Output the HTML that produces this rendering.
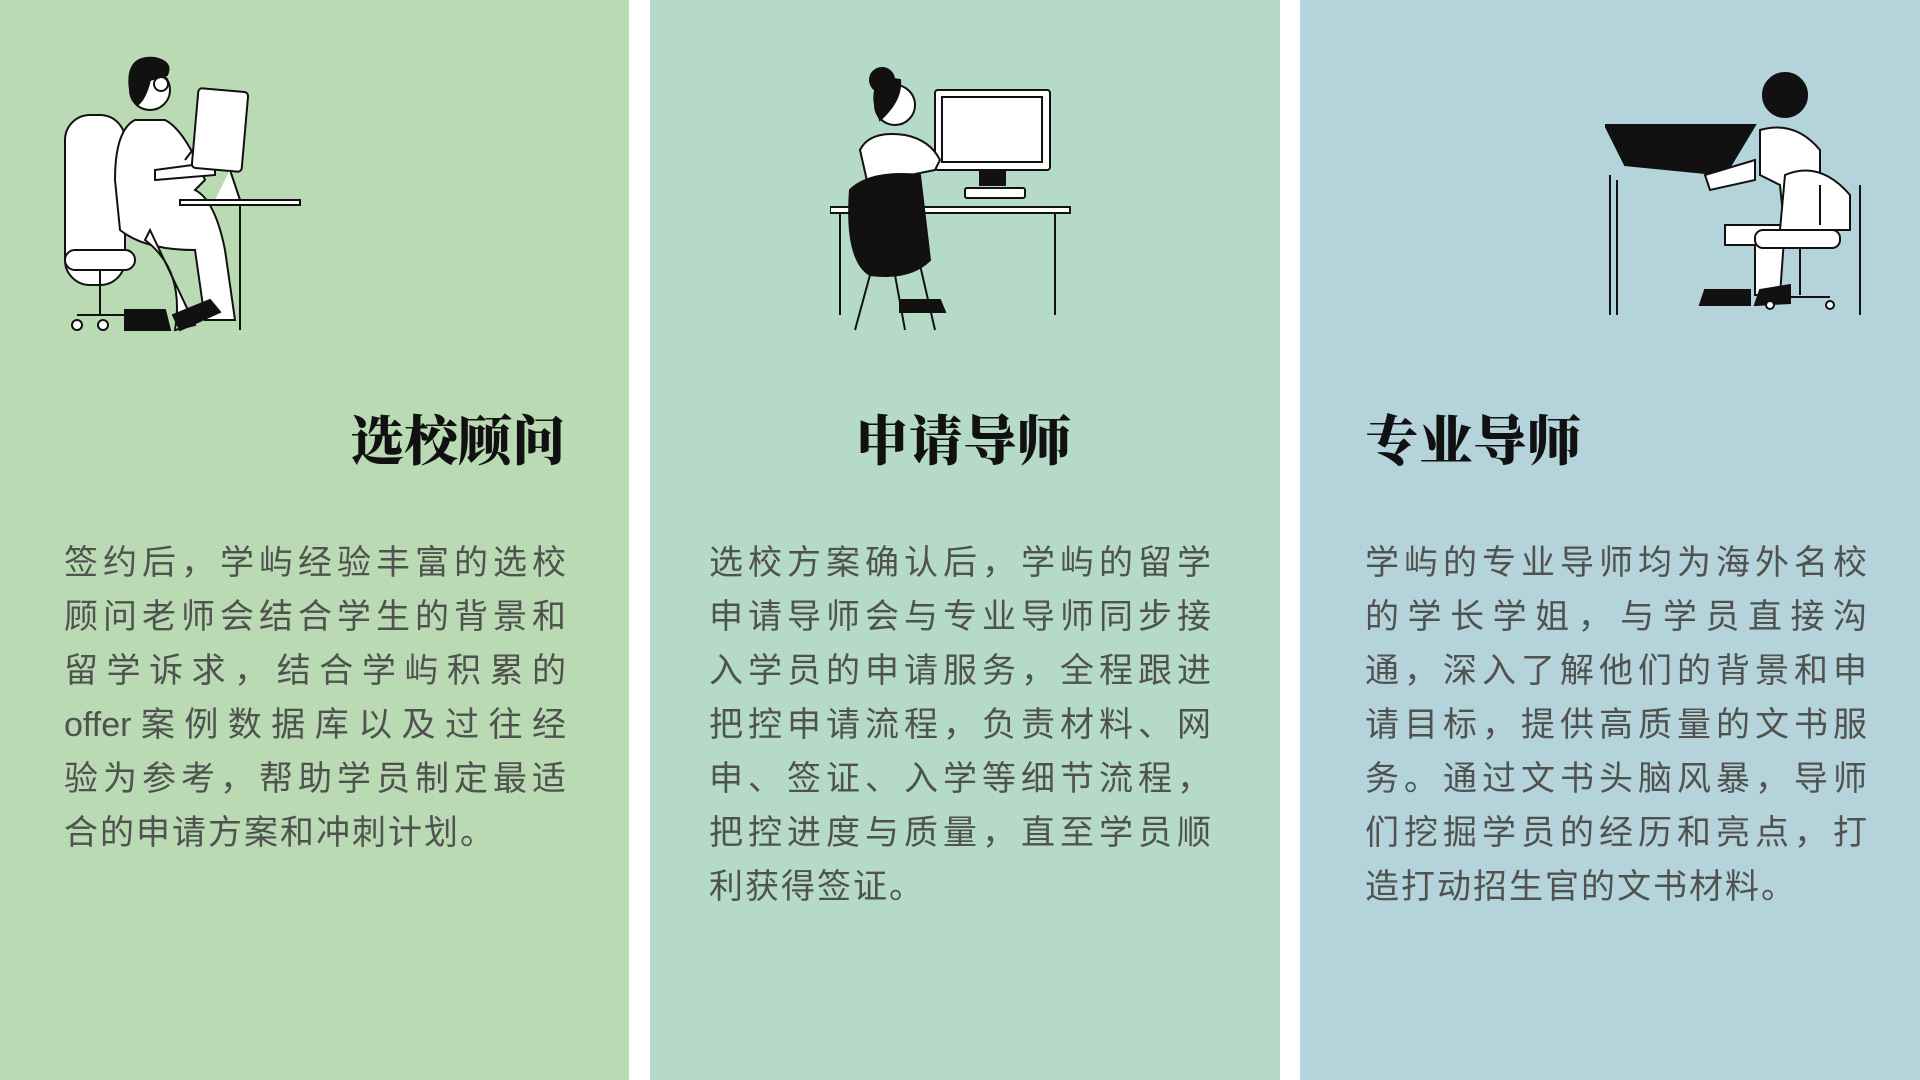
<!DOCTYPE html>
<html><head><meta charset="utf-8"><style>
html,body{margin:0;padding:0;width:1920px;height:1080px;background:#fff;overflow:hidden}
.p{position:absolute;top:0;height:1080px}
.t{position:absolute;font-family:"Noto Serif CJK SC",serif;font-weight:900;font-size:54px;color:#111;top:398px;line-height:80px;white-space:nowrap}
.b{position:absolute;top:536px;width:502px;font-family:"Liberation Sans","Noto Sans CJK SC",sans-serif;font-size:34px;color:#4f524f;line-height:54px}
.b div{text-align:justify;text-align-last:justify;white-space:nowrap;height:54px}
.b div.l{text-align-last:left;letter-spacing:2px}
svg{position:absolute}
</style></head><body>
<div class="p" style="left:0;width:629px;background:#badab4"></div>
<div class="p" style="left:650px;width:630px;background:#b5dac8"></div>
<div class="p" style="left:1300px;width:620px;background:#b5d3db"></div>

<svg style="left:55px;top:50px" width="260" height="290" viewBox="0 0 260 290" fill="#fff" stroke="#111" stroke-width="2">
<rect x="10" y="65" width="60" height="170" rx="25"/>
<path d="M80 70 Q60 80 60 130 L65 180 Q90 200 140 200 L150 270 L180 270 L170 200 Q160 150 140 140 L150 130 Q130 80 110 70Z"/>
<path d="M95 180 L140 275 L120 280 Q130 220 90 190Z"/>
<rect x="10" y="200" width="70" height="20" rx="10"/>
<path d="M45 220 V265 M22 265 H75" fill="none"/>
<circle cx="22" cy="275" r="5"/><circle cx="48" cy="275" r="5"/>
<path d="M70 260 L110 260 L115 280 L70 280Z" fill="#111"/>
<path d="M118 265 L155 250 L165 262 L125 280Z" fill="#111"/>
<circle cx="95" cy="40" r="20"/>
<path d="M75 40 Q70 5 100 8 Q118 12 112 25 L95 30 Q90 50 82 55Z" fill="#111"/>
<circle cx="106" cy="34" r="7" fill="none"/>
<path d="M100 120 L160 112 L160 125 L100 130Z"/>
<path d="M130 110 L145 90" fill="none"/>
<rect x="140" y="40" width="50" height="80" rx="4" transform="rotate(5 165 80)"/>
<path d="M175 120 L185 150 L160 150" />
<path d="M125 150 H245 V155 H125Z"/>
<path d="M185 155 V280" fill="none"/>
</svg>

<svg style="left:830px;top:60px" width="250" height="280" viewBox="0 0 250 280" fill="#fff" stroke="#111" stroke-width="2">
<rect x="105" y="30" width="115" height="80" rx="3"/>
<rect x="112" y="37" width="100" height="65" fill="none"/>
<path d="M150 110 V125 H175 V110" fill="#111"/>
<rect x="135" y="128" width="60" height="10" rx="2"/>
<path d="M0 147 H240 V153 H0Z"/>
<path d="M10 153 V255 M225 153 V255" fill="none"/>
<path d="M30 90 Q40 70 75 75 Q100 80 110 100 L105 110 L80 115 L90 200 L55 200Z"/>
<circle cx="65" cy="45" r="20"/>
<path d="M45 45 Q40 15 70 20 Q72 40 50 60Z" fill="#111"/>
<circle cx="52" cy="20" r="12" fill="#111"/>
<path d="M20 130 Q40 110 90 115 L100 200 Q80 220 40 215 Q15 200 20 130Z" fill="#111"/>
<path d="M40 215 L25 270 M65 215 L75 270 M90 205 L105 270" fill="none"/>
<path d="M70 240 L110 240 L115 252 L70 252Z" fill="#111"/>
</svg>

<svg style="left:1605px;top:65px" width="265" height="260" viewBox="0 0 265 260" fill="#fff" stroke="#111" stroke-width="2">
<path d="M0 60 L150 60 L120 110 L20 100Z" fill="#111"/>
<path d="M5 110 V250 M12 115 V250" fill="none"/>
<circle cx="180" cy="30" r="22" fill="#111"/>
<path d="M155 65 Q190 55 215 85 L215 170 L180 170 L175 120 L155 110Z"/>
<path d="M100 110 L150 95 L150 115 L105 125Z"/>
<path d="M120 160 L180 160 L175 230 L150 230 L150 180 L120 180Z"/>
<path d="M100 225 L145 225 L145 240 L95 240Z" fill="#111"/>
<path d="M155 225 L185 220 L185 238 L150 240Z" fill="#111"/>
<path d="M180 110 Q215 95 245 130 V165 H175Z"/>
<rect x="150" y="165" width="85" height="18" rx="8"/>
<path d="M195 183 V230 M165 232 H225 M215 120 V160 M255 120 V250" fill="none"/>
<circle cx="165" cy="240" r="4"/><circle cx="225" cy="240" r="4"/>
</svg>

<div class="t" style="right:1354px">选校顾问</div>
<div class="t" style="left:855px">申请导师</div>
<div class="t" style="left:1365px">专业导师</div>

<div class="b" style="left:64px">
<div>签约后，学屿经验丰富的选校</div>
<div>顾问老师会结合学生的背景和</div>
<div>留学诉求，结合学屿积累的</div>
<div>offer案例数据库以及过往经</div>
<div>验为参考，帮助学员制定最适</div>
<div class="l">合的申请方案和冲刺计划。</div>
</div>
<div class="b" style="left:709px">
<div>选校方案确认后，学屿的留学</div>
<div>申请导师会与专业导师同步接</div>
<div>入学员的申请服务，全程跟进</div>
<div>把控申请流程，负责材料、网</div>
<div>申、签证、入学等细节流程，</div>
<div>把控进度与质量，直至学员顺</div>
<div class="l">利获得签证。</div>
</div>
<div class="b" style="left:1365px">
<div>学屿的专业导师均为海外名校</div>
<div>的学长学姐，与学员直接沟</div>
<div>通，深入了解他们的背景和申</div>
<div>请目标，提供高质量的文书服</div>
<div>务。通过文书头脑风暴，导师</div>
<div>们挖掘学员的经历和亮点，打</div>
<div class="l">造打动招生官的文书材料。</div>
</div>
</body></html>
